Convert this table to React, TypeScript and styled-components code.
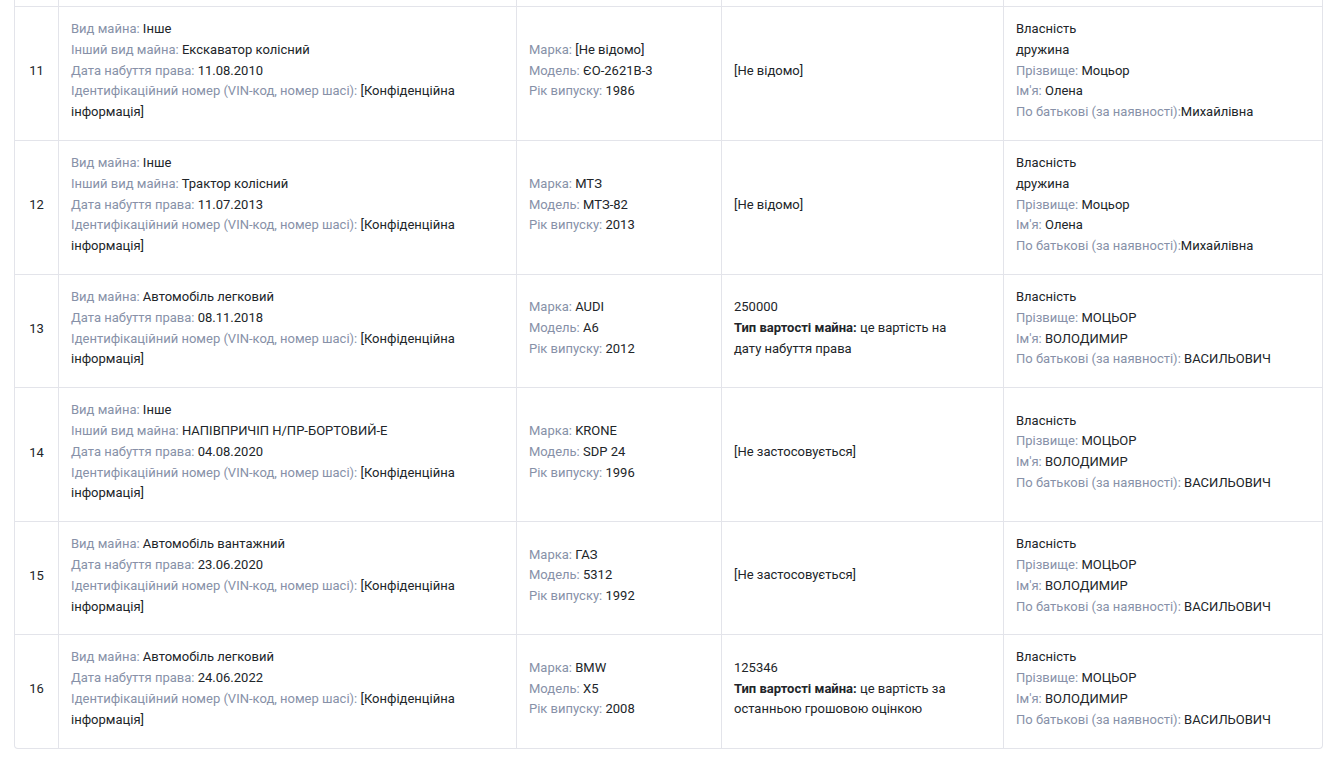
import styled, { createGlobalStyle } from 'styled-components';

type Pair = [string, string];

interface RowData {
  n: number;
  property: Pair[];
  vehicle: Pair[];
  cost: string;
  costType?: string;
  owner: Pair[];
}

const CONF = '[Конфіденційна інформація]';
const VIN = 'Ідентифікаційний номер (VIN-код, номер шасі): ';

const rows: RowData[] = [
  {
    n: 11,
    property: [
      ['Вид майна: ', 'Інше'],
      ['Інший вид майна: ', 'Екскаватор колісний'],
      ['Дата набуття права: ', '11.08.2010'],
      [VIN, CONF],
    ],
    vehicle: [
      ['Марка: ', '[Не відомо]'],
      ['Модель: ', 'ЄО-2621В-3'],
      ['Рік випуску: ', '1986'],
    ],
    cost: '[Не відомо]',
    owner: [
      ['', 'Власність'],
      ['', 'дружина'],
      ['Прізвище: ', 'Моцьор'],
      ["Ім'я: ", 'Олена'],
      ['По батькові (за наявності):', 'Михайлівна'],
    ],
  },
  {
    n: 12,
    property: [
      ['Вид майна: ', 'Інше'],
      ['Інший вид майна: ', 'Трактор колісний'],
      ['Дата набуття права: ', '11.07.2013'],
      [VIN, CONF],
    ],
    vehicle: [
      ['Марка: ', 'МТЗ'],
      ['Модель: ', 'МТЗ-82'],
      ['Рік випуску: ', '2013'],
    ],
    cost: '[Не відомо]',
    owner: [
      ['', 'Власність'],
      ['', 'дружина'],
      ['Прізвище: ', 'Моцьор'],
      ["Ім'я: ", 'Олена'],
      ['По батькові (за наявності):', 'Михайлівна'],
    ],
  },
  {
    n: 13,
    property: [
      ['Вид майна: ', 'Автомобіль легковий'],
      ['Дата набуття права: ', '08.11.2018'],
      [VIN, CONF],
    ],
    vehicle: [
      ['Марка: ', 'AUDI'],
      ['Модель: ', 'A6'],
      ['Рік випуску: ', '2012'],
    ],
    cost: '250000',
    costType: 'це вартість на дату набуття права',
    owner: [
      ['', 'Власність'],
      ['Прізвище: ', 'МОЦЬОР'],
      ["Ім'я: ", 'ВОЛОДИМИР'],
      ['По батькові (за наявності): ', 'ВАСИЛЬОВИЧ'],
    ],
  },
  {
    n: 14,
    property: [
      ['Вид майна: ', 'Інше'],
      ['Інший вид майна: ', 'НАПІВПРИЧІП Н/ПР-БОРТОВИЙ-Е'],
      ['Дата набуття права: ', '04.08.2020'],
      [VIN, CONF],
    ],
    vehicle: [
      ['Марка: ', 'KRONE'],
      ['Модель: ', 'SDP 24'],
      ['Рік випуску: ', '1996'],
    ],
    cost: '[Не застосовується]',
    owner: [
      ['', 'Власність'],
      ['Прізвище: ', 'МОЦЬОР'],
      ["Ім'я: ", 'ВОЛОДИМИР'],
      ['По батькові (за наявності): ', 'ВАСИЛЬОВИЧ'],
    ],
  },
  {
    n: 15,
    property: [
      ['Вид майна: ', 'Автомобіль вантажний'],
      ['Дата набуття права: ', '23.06.2020'],
      [VIN, CONF],
    ],
    vehicle: [
      ['Марка: ', 'ГАЗ'],
      ['Модель: ', '5312'],
      ['Рік випуску: ', '1992'],
    ],
    cost: '[Не застосовується]',
    owner: [
      ['', 'Власність'],
      ['Прізвище: ', 'МОЦЬОР'],
      ["Ім'я: ", 'ВОЛОДИМИР'],
      ['По батькові (за наявності): ', 'ВАСИЛЬОВИЧ'],
    ],
  },
  {
    n: 16,
    property: [
      ['Вид майна: ', 'Автомобіль легковий'],
      ['Дата набуття права: ', '24.06.2022'],
      [VIN, CONF],
    ],
    vehicle: [
      ['Марка: ', 'BMW'],
      ['Модель: ', 'X5'],
      ['Рік випуску: ', '2008'],
    ],
    cost: '125346',
    costType: 'це вартість за останньою грошовою оцінкою',
    owner: [
      ['', 'Власність'],
      ['Прізвище: ', 'МОЦЬОР'],
      ["Ім'я: ", 'ВОЛОДИМИР'],
      ['По батькові (за наявності): ', 'ВАСИЛЬОВИЧ'],
    ],
  },
];

function Lines({ items }: { items: Pair[] }) {
  return (
    <>
      {items.map(([label, value], i) => (
        <Line key={i}>
          {label && <Label>{label}</Label>}
          {value}
        </Line>
      ))}
    </>
  );
}

export default function App() {
  return (
    <>
      <GlobalStyle />
      <Page>
        <Table>
          {/* tail of the row above, scrolled out of view */}
          <TailRow>
            <TailCell />
            <TailCell />
            <TailCell />
            <TailCell />
            <TailCell />
          </TailRow>
          {rows.map((r) => (
            <Row key={r.n}>
              <Cell $center>{r.n}</Cell>
              <Cell>
                <Lines items={r.property} />
              </Cell>
              <Cell>
                <Lines items={r.vehicle} />
              </Cell>
              <Cell $narrow>
                <Line>{r.cost}</Line>
                {r.costType && (
                  <Line>
                    <Strong>Тип вартості майна:</Strong> {r.costType}
                  </Line>
                )}
              </Cell>
              <Cell>
                <Lines items={r.owner} />
              </Cell>
            </Row>
          ))}
        </Table>
      </Page>
    </>
  );
}

const GlobalStyle = createGlobalStyle`
  body {
    margin: 0;
    background: #ffffff;
    font-family: Roboto, "Liberation Sans", Arial, sans-serif;
    font-size: 13px;
    color: #212529;
  }
`;

const Page = styled.div`
  padding: 0 16px 15px 14px;
`;

const Table = styled.div`
  border: 1px solid #e3e4ea;
  border-top: none;
  border-radius: 0 0 4px 4px;
  overflow: hidden;
`;

const Row = styled.div`
  display: grid;
  grid-template-columns: 44px 458px 205px 282px 1fr;
  border-bottom: 1px solid #e3e4ea;
  &:last-child {
    border-bottom: none;
  }
`;

const TailRow = styled(Row)`
  height: 6px;
`;

const TailCell = styled.div`
  border-right: 1px solid #e3e4ea;
  &:last-child {
    border-right: none;
  }
`;

const Cell = styled.div<{ $center?: boolean; $narrow?: boolean }>`
  display: flex;
  flex-direction: column;
  justify-content: center;
  align-items: ${(p) => (p.$center ? 'center' : 'flex-start')};
  padding: ${(p) =>
    p.$center ? '12px 0 17px' : p.$narrow ? '12px 40px 17px 12px' : '12px 12px 17px 12px'};
  border-right: 1px solid #e3e4ea;
  &:last-child {
    border-right: none;
  }
`;

const Line = styled.div`
  line-height: 20.8px;
`;

const Label = styled.span`
  color: #8791a8;
`;

const Strong = styled.b`
  font-weight: 700;
`;
